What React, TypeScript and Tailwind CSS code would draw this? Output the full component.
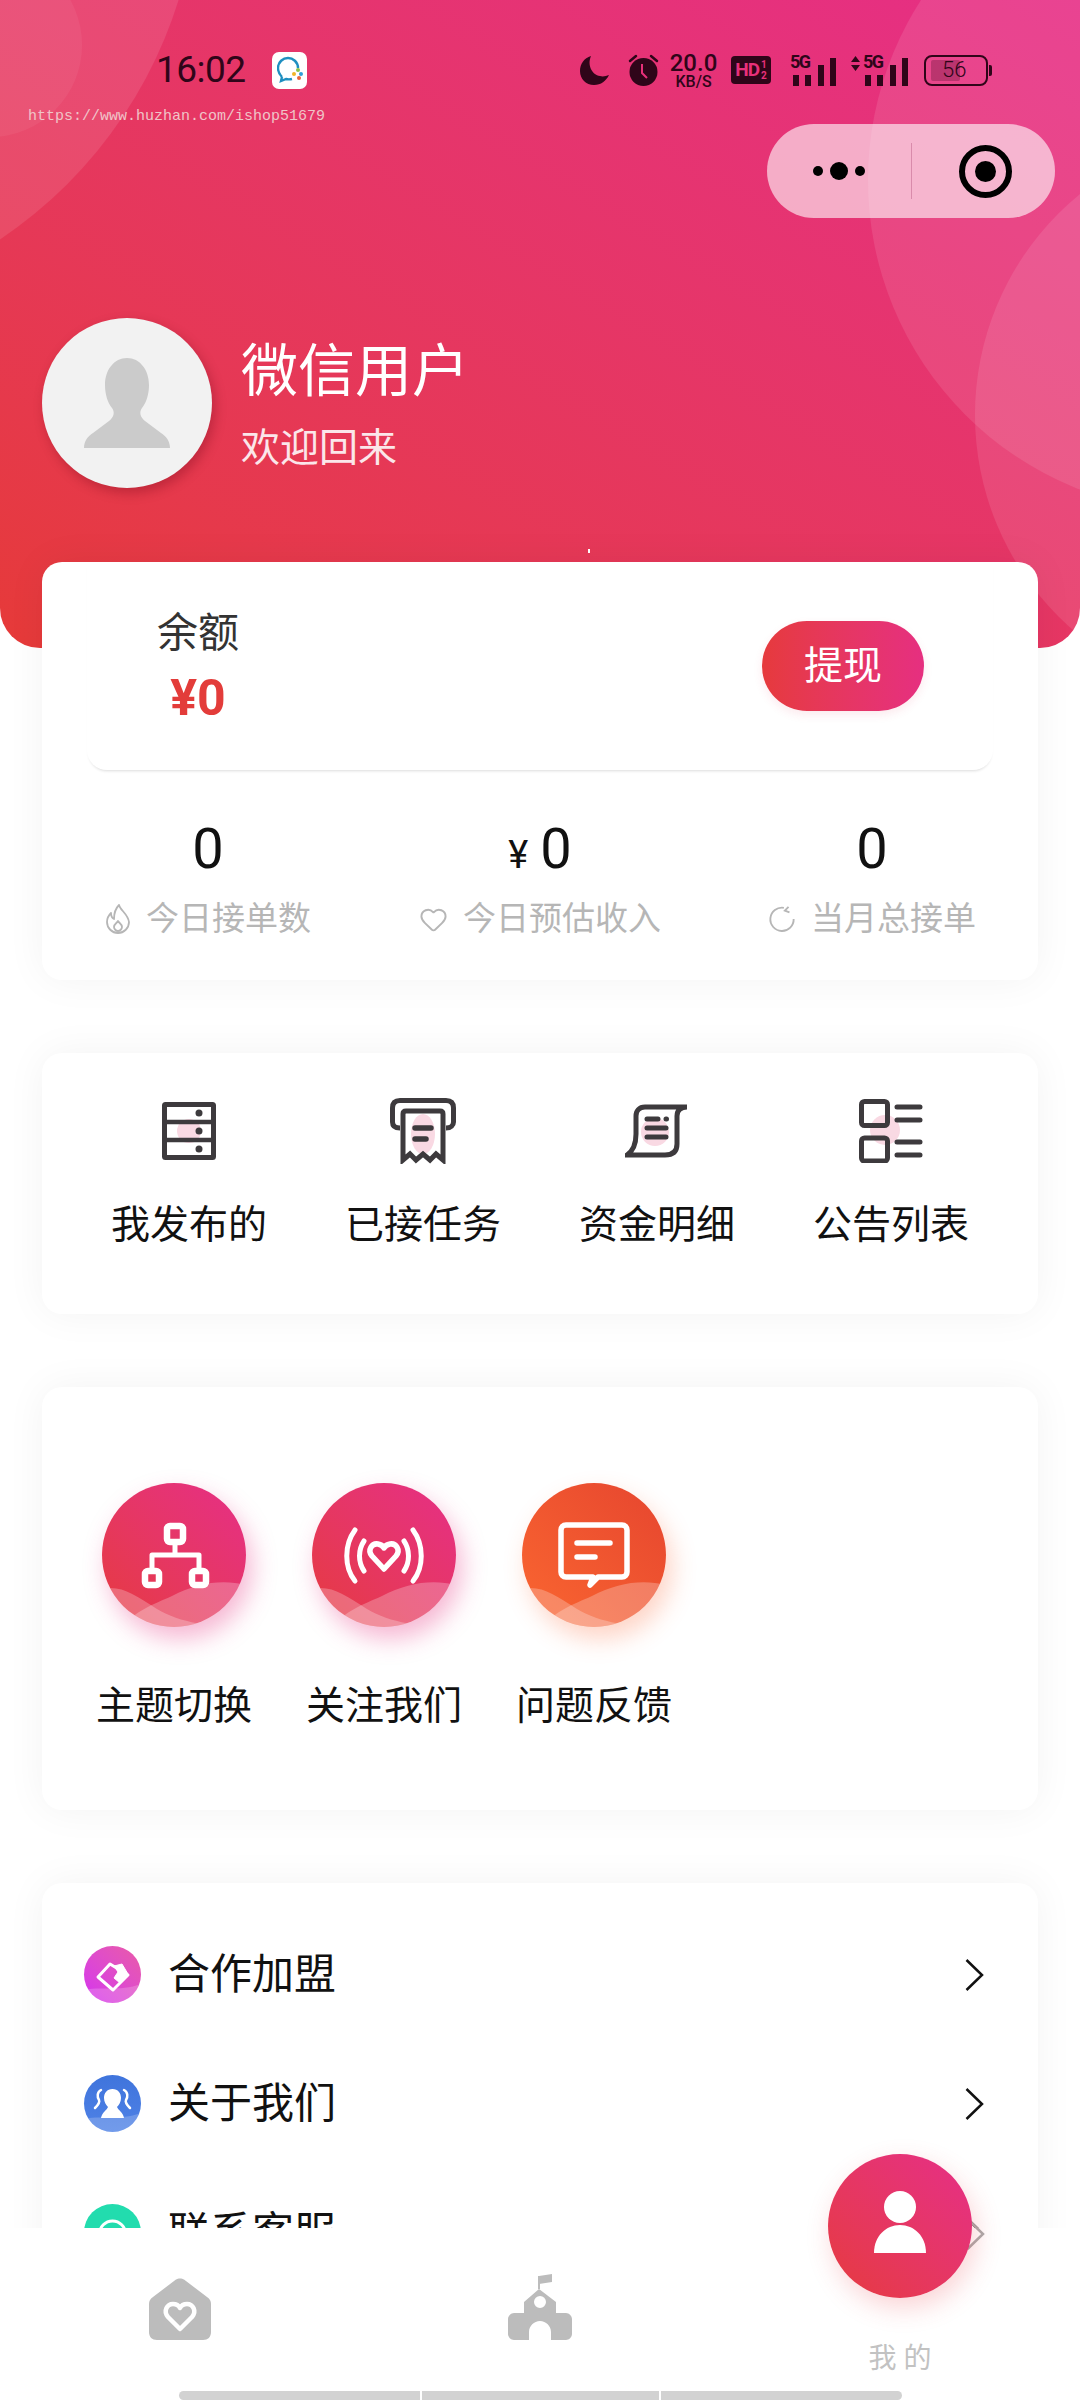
import React from 'react';
import { Heart } from 'lucide-react';

const INK = '#2f0519';

const Moon = () => (
    <svg width="29" height="29" viewBox="0 0 29 29"><path d="M11 0C4 2 0 8 0 15c0 8 6 14 14 14 7 0 12-4 15-10-3 1-6 2-9 1C12 19 7 9 11 0z" fill={INK} /></svg>
);

const Alarm = () => (
    <svg width="31" height="32" viewBox="0 0 31 32">
        <circle cx="15.5" cy="18" r="14" fill={INK} />
        <path d="M2 7 8 2M29 7l-6-5" stroke={INK} strokeWidth="2.5" strokeLinecap="round" />
        <path d="M14 10v9l5 5" stroke="#e8307a" strokeWidth="2" fill="none" />
    </svg>
);

const Signal = ({ arrows }: { arrows?: boolean }) => (
    <div className={arrows ? 'relative w-[58px] h-[31px]' : 'relative w-[46px] h-[31px]'}>
        {arrows && (
            <svg className="absolute left-0 top-[1px]" width="11" height="15" viewBox="0 0 11 15">
                <path d="M5.5 0 10 6H1zM5.5 15 1 9h9z" fill={INK} />
            </svg>
        )}
        <span className={arrows ? 'absolute left-[13px] top-[-1px] text-[18px] leading-[16px] font-bold tracking-[-1.5px]' : 'absolute left-0 top-[-1px] text-[18px] leading-[16px] font-bold tracking-[-1.5px]'} style={{ color: INK }}>5G</span>
        <svg className="absolute right-0 bottom-0" width="43" height="28" viewBox="0 0 43 28">
            <rect x="0" y="17" width="6" height="11" fill={INK} />
            <rect x="12" y="17" width="6" height="11" fill={INK} />
            <rect x="25" y="7" width="6" height="21" fill={INK} />
            <rect x="37" y="0" width="6" height="28" fill={INK} />
        </svg>
    </div>
);

const StatusBar = () => (
    <div className="flex items-center h-[40px] mt-[50px] pl-[156px] pr-[88px] text-[#2f0519]">
        <span className="text-[37px] leading-[40px] w-[92px] tracking-[-0.5px]">16:02</span>
        <div className="ml-[24px] w-[35px] h-[37px] bg-white rounded-[7px] flex items-center justify-center">
            <svg width="26" height="28" viewBox="0 0 26 28">
                <path d="M5 21C2 18 1 15 1 12 1 6 6 2 11 2s10 4 10 10" stroke="#1f8fc0" strokeWidth="2.4" fill="none" />
                <path d="M5 21l-1 4 5-2c2 .5 4 .5 6 0" stroke="#1f8fc0" strokeWidth="2.4" fill="none" />
                <circle cx="21" cy="14" r="2" fill="#8ac24a" />
                <circle cx="17" cy="18" r="2" fill="#f0b429" />
                <circle cx="22" cy="22" r="2" fill="#e8643a" />
                <circle cx="24" cy="18" r="2" fill="#2f9fd8" />
            </svg>
        </div>
        <div className="ml-auto flex items-center">
            <Moon />
            <div className="ml-[19px]"><Alarm /></div>
            <div className="ml-[10px] w-[49px] flex flex-col items-center">
                <span className="text-[24px] leading-[22px] font-medium">20.0</span>
                <span className="text-[16px] leading-[15px] font-medium">KB/S</span>
            </div>
            <div className="ml-[13px] w-[40px] h-[28px] bg-[#2f0519] rounded-[4px] flex items-center justify-center text-[#e8307a] font-bold">
                <span className="text-[19px] leading-[28px] tracking-[-1px]">HD</span>
                <span className="flex flex-col text-[10px] leading-[11px] ml-[2px]"><span>1</span><span>2</span></span>
            </div>
            <div className="ml-[19px]"><Signal /></div>
            <div className="ml-[14px]"><Signal arrows /></div>
            <div className="ml-[16px] flex items-center">
                <div className="relative w-[64px] h-[31px] border-[2.5px] border-[#2f0519] rounded-[8px] flex items-center">
                    <div className="absolute left-[5px] top-[3px] bottom-[3px] w-[29px] bg-[#2f0519]/25 rounded-[2px]" />
                    <span className="relative ml-[16px] text-[22px] leading-[26px] font-light">56</span>
                </div>
                <div className="w-[3px] h-[11px] ml-[1px] bg-[#2f0519] rounded-r-[2px]" />
            </div>
        </div>
    </div>
);

const Capsule = () => (
    <div className="ml-auto mr-[25px] mt-[34px] w-[288px] h-[94px] rounded-full bg-white/60 flex items-center">
        <div className="w-[144px] flex items-center justify-center gap-[7px]">
            <span className="w-[10px] h-[10px] rounded-full bg-black" />
            <span className="w-[18px] h-[18px] rounded-full bg-black" />
            <span className="w-[10px] h-[10px] rounded-full bg-black" />
        </div>
        <div className="w-[1px] h-[56px] bg-[#d98bab]" />
        <div className="flex-1 flex items-center justify-center pl-[4px]">
            <div className="w-[53px] h-[53px] rounded-full border-[6px] border-black flex items-center justify-center">
                <span className="w-[21px] h-[21px] rounded-full bg-black" />
            </div>
        </div>
    </div>
);

const Header = () => (
    <div className="relative h-[648px] rounded-b-[40px] overflow-hidden bg-linear-to-tr from-[#e63a38] to-[#e62e86]">
        {/* background blobs */}
        <div className="absolute left-[-701px] top-[-584px] w-[900px] h-[900px] rounded-full bg-white/10" />
        <div className="absolute left-[-102px] top-[-47px] w-[184px] h-[184px] rounded-full bg-white/5" />
        <div className="absolute left-[868px] top-[-152px] w-[664px] h-[664px] rounded-full bg-white/10" />
        <div className="absolute left-[975px] top-[130px] w-[570px] h-[570px] rounded-full bg-white/10" />
        <span className="absolute left-[28px] top-[108px] text-[15px] leading-[18px] text-[#f0c4c8] font-['Liberation_Mono',monospace]">https://www.huzhan.com/ishop51679</span>
        <span className="absolute left-[588px] top-[549px] w-[2px] h-[4px] bg-white" />
        <div className="relative flex flex-col">
            <StatusBar />
            <Capsule />
            <div className="flex items-center ml-[42px] mt-[100px] gap-[29px]">
                <div className="w-[170px] h-[170px] rounded-full bg-[#f2f2f2] shadow-[3px_5px_12px_rgba(100,0,20,0.3)] flex items-center justify-center">
                    <svg width="88" height="90" viewBox="0 0 88 90">
                        <path d="M44 0c13 0 22 12 22 27 0 10-3 18-7 23-3 4-2 9 3 13l16 12c5 3 9 8 9 15H1c0-7 4-12 9-15l16-12c5-4 6-9 3-13-4-5-7-13-7-23C22 12 31 0 44 0z" fill="#cbcbcb" />
                    </svg>
                </div>
                <div className="flex flex-col text-white mt-[5px]">
                    <span className="text-[57px] leading-[66px]">微信用户</span>
                    <span className="text-[39px] leading-[48px] mt-[19px] text-[#fbe6ea]">欢迎回来</span>
                </div>
            </div>
        </div>
    </div>
);

const stats = [
    {
        label: '今日接单数',
        value: '0',
        icon: (
            <svg width="26" height="30" viewBox="0 0 26 30" fill="none" stroke="currentColor" strokeWidth="1.8" strokeLinejoin="round">
                <path d="M14 1c1 5 9 9 10 17 0 6-5 11-11 11S2 24 2 18c0-4 2-7 4-9 0 3 1 5 3 6 0-5 1-10 5-14z" />
                <path d="M13 17c1 2 4 3 4 6 0 2-2 4-4 4s-4-2-4-4c0-3 3-4 4-6z" />
            </svg>
        ),
    },
    { label: '今日预估收入', value: '0', yen: true, icon: <Heart size={29} strokeWidth={1.6} /> },
    {
        label: '当月总接单',
        value: '0',
        icon: (
            <svg width="28" height="28" viewBox="0 0 30 30" fill="none" stroke="currentColor" strokeWidth="2">
                <path d="M17 3A12.5 12.5 0 1 0 27.5 15" />
                <path d="M22 2l-4 4 5 2" />
            </svg>
        ),
    },
];

const BalanceCard = () => (
    <div className="h-[418px] bg-white rounded-[20px] shadow-[0_0_40px_rgba(0,0,0,0.05)]">
        <div className="mx-[45px] h-[208px] rounded-b-[20px] shadow-[0_3px_3px_-2px_rgba(0,0,0,0.14)] flex items-center justify-between pl-[70px] pr-[69px]">
            <div className="flex flex-col items-center w-[82px] mt-[2px]">
                <span className="text-[41px] leading-[48px] text-[#333]">余额</span>
                <span className="text-[50px] leading-[56px] mt-[13px] font-bold text-[#e33c3a]">¥0</span>
            </div>
            <div className="w-[162px] h-[90px] rounded-full bg-linear-to-r from-[#e63a3c] to-[#e62f80] shadow-[0_4px_10px_rgba(230,50,90,0.1)] text-white text-[39px] flex items-center justify-center">提现</div>
        </div>
        <div className="grid grid-cols-3 mt-[49px]">
            {stats.map((s) => (
                <div key={s.label} className="flex flex-col items-center">
                    <div className="flex items-baseline h-[60px] text-[#111]">
                        {s.yen && <span className="text-[38px] leading-[60px] mr-[12px]">¥</span>}
                        <span className="text-[56px] leading-[60px]">{s.value}</span>
                    </div>
                    <div className="flex items-center gap-[15px] mt-[17px] text-[#b6b6b6]">
                        {s.icon}
                        <span className="text-[33px] leading-[46px]">{s.label}</span>
                    </div>
                </div>
            ))}
        </div>
    </div>
);

const DARK = '#3d3a3d';
const PINK = '#f9d9e3';

const tools = [
    {
        label: '我发布的',
        icon: (
            <svg width="54" height="58" viewBox="0 0 54 58" fill="none" stroke={DARK}>
                <circle cx="27" cy="29" r="12" fill={PINK} stroke="none" />
                <rect x="2.5" y="2.5" width="49" height="53" rx="1" strokeWidth="5" />
                <path d="M3 20h48M3 38h48" strokeWidth="4.5" />
                <circle cx="37" cy="11" r="3.5" fill={DARK} stroke="none" />
                <circle cx="37" cy="29" r="3.5" fill={DARK} stroke="none" />
                <circle cx="37" cy="47" r="3.5" fill={DARK} stroke="none" />
            </svg>
        ),
    },
    {
        label: '已接任务',
        icon: (
            <svg width="66" height="66" viewBox="0 0 66 66" fill="none" stroke={DARK} strokeWidth="5">
                <ellipse cx="33" cy="36" rx="12" ry="20" fill={PINK} stroke="none" />
                <path d="M10 30C4 30 2.5 27 2.5 24V10C2.5 5 5 2.5 10 2.5H56C61 2.5 63.5 5 63.5 10V24C63.5 27 61 30 56 30" />
                <path d="M13 62V16C13 14 14 13 16 13H50C52 13 53 14 53 16V62L46 56 40 62 33 56 26 62 20 56 13 62Z" />
                <path d="M25 30H41M25 41H36" strokeWidth="5.5" strokeLinecap="round" />
            </svg>
        ),
    },
    {
        label: '资金明细',
        icon: (
            <svg width="64" height="54" viewBox="0 0 64 54" fill="none" stroke={DARK} strokeWidth="5" strokeLinecap="round">
                <circle cx="30" cy="28" r="14" fill={PINK} stroke="none" />
                <path d="M62 3H20C14 3 11 7 11 12V30C11 41 8 47 2 51H40C48 51 52 47 52 40V12C52 7 55 3 62 3Z" />
                <path d="M22 15H33M41 15H41.5M22 24H41M22 33H41" />
            </svg>
        ),
    },
    {
        label: '公告列表',
        icon: (
            <svg width="64" height="64" viewBox="0 0 64 64" fill="none" stroke={DARK} strokeWidth="5" strokeLinecap="round">
                <circle cx="26" cy="31" r="15" fill={PINK} stroke="none" />
                <rect x="2.5" y="2.5" width="26" height="24" rx="3" />
                <rect x="2.5" y="39" width="26" height="23" rx="3" />
                <path d="M38 8H61M38 21H61M38 43H61M38 56H61" />
            </svg>
        ),
    },
];

const ToolsCard = () => (
    <div className="h-[261px] bg-white rounded-[20px] shadow-[0_0_40px_rgba(0,0,0,0.05)] grid grid-cols-4 px-[30px] pt-[45px]">
        {tools.map((t) => (
            <div key={t.label} className="flex flex-col items-center">
                <div className="h-[66px] flex items-center justify-center">{t.icon}</div>
                <span className="mt-[36px] text-[39px] leading-[50px] text-[#111]">{t.label}</span>
            </div>
        ))}
    </div>
);

const Waves = () => (
    <svg className="absolute inset-0" width="144" height="144" viewBox="0 0 144 144">
        <path d="M0 106C20 102 32 112 55 126 78 140 110 144 144 144H0Z" fill="#fff" fillOpacity="0.25" />
        <path d="M22 144C32 128 50 122 70 113 95 100 120 96 144 102V144Z" fill="#fff" fillOpacity="0.25" />
    </svg>
);

const shortcuts = [
    {
        label: '主题切换',
        circle: 'relative w-[144px] h-[144px] rounded-full overflow-hidden bg-linear-to-tr from-[#e63a3c] to-[#e62e86]',
        glow: 'rounded-full shadow-[6px_12px_24px_rgba(230,50,130,0.35)]',
        icon: (
            <svg className="absolute inset-0" width="144" height="144" viewBox="0 0 144 144" fill="none" stroke="#fff" strokeWidth="5" strokeLinejoin="round">
                <rect x="65" y="43" width="16" height="16" rx="3" strokeWidth="6.5" />
                <path d="M73 60V72M50 86V72H97V86" />
                <rect x="43" y="88" width="14" height="14" rx="3" strokeWidth="6.5" />
                <rect x="90" y="88" width="14" height="14" rx="3" strokeWidth="6.5" />
            </svg>
        ),
    },
    {
        label: '关注我们',
        circle: 'relative w-[144px] h-[144px] rounded-full overflow-hidden bg-linear-to-tr from-[#e63a3c] to-[#e62e86]',
        glow: 'rounded-full shadow-[6px_12px_24px_rgba(230,50,130,0.35)]',
        icon: (
            <svg className="absolute inset-0" width="144" height="144" viewBox="0 0 144 144" fill="none" stroke="#fff" strokeWidth="5" strokeLinecap="round">
                <path d="M72 86 60 73C55 67 60 60 66 61 69 61.5 71 63 72 65 73 63 75 61.5 78 61 84 60 89 67 84 73Z" strokeWidth="5.5" strokeLinejoin="round" />
                <path d="M52 58C46 67 46 79 52 88M92 58C98 67 98 79 92 88" />
                <path d="M43 47C32 62 32 84 43 98M101 47C112 62 112 84 101 98" />
            </svg>
        ),
    },
    {
        label: '问题反馈',
        circle: 'relative w-[144px] h-[144px] rounded-full overflow-hidden bg-linear-to-tr from-[#fa6630] to-[#e6452f]',
        glow: 'rounded-full shadow-[6px_12px_24px_rgba(250,100,50,0.28)]',
        icon: (
            <svg className="absolute inset-0" width="144" height="144" viewBox="0 0 144 144" fill="none" stroke="#fff" strokeWidth="5.5" strokeLinecap="round" strokeLinejoin="round">
                <path d="M44 42H100C103 42 105 44 105 47V89C105 92 103 94 100 94H76L68 102 71 94H44C41 94 39 92 39 89V47C39 44 41 42 44 42Z" />
                <path d="M55 60H88M55 74H73" />
            </svg>
        ),
    },
];

const ShortcutCard = () => (
    <div className="h-[423px] bg-white rounded-[20px] shadow-[0_0_40px_rgba(0,0,0,0.05)] flex pl-[27px] pt-[96px]">
        {shortcuts.map((s) => (
            <div key={s.label} className="w-[210px] flex flex-col items-center">
                <div className={s.glow}>
                    <div className={s.circle}>
                        <Waves />
                        {s.icon}
                    </div>
                </div>
                <span className="mt-[54px] text-[39px] leading-[50px] text-[#111]">{s.label}</span>
            </div>
        ))}
    </div>
);

const MiniWave = () => (
    <svg className="absolute inset-0" width="57" height="57" viewBox="0 0 57 57">
        <path d="M0 44C15 40 35 46 57 38V57H0Z" fill="#fff" fillOpacity="0.2" />
    </svg>
);

const menu = [
    {
        label: '合作加盟',
        circle: 'relative w-[57px] h-[57px] rounded-full overflow-hidden bg-linear-to-bl from-[#ea5aa6] to-[#d52ff0]',
        icon: (
            <svg className="absolute inset-0" width="57" height="57" viewBox="0 0 57 57" fill="none" stroke="#fff" strokeWidth="3" strokeLinejoin="round">
                <path d="M14 31 26 18 44 29 29 44Z" />
                <path d="M30 20 38 18 44 28 36 37 30 32 34 26Z" fill="#fff" strokeWidth="1" />
            </svg>
        ),
    },
    {
        label: '关于我们',
        circle: 'relative w-[57px] h-[57px] rounded-full overflow-hidden bg-linear-to-b from-[#3f74dc] to-[#4f82e6]',
        icon: (
            <svg className="absolute inset-0" width="57" height="57" viewBox="0 0 57 57" fill="none">
                <path d="M28.5 14C23 14 20 18 20 23 20 27 22 30 24 32 23 35 18 37 17 43H40C39 37 34 35 33 32 35 30 37 27 37 23 37 18 34 14 28.5 14Z" fill="#fff" />
                <path d="M17 15C13 17 13 22 15 25 16 27 14 30 11 33M40 15C44 17 44 22 42 25 41 27 43 30 46 33" stroke="#fff" strokeWidth="2.5" strokeLinecap="round" />
            </svg>
        ),
    },
    {
        label: '联系客服',
        circle: 'relative w-[57px] h-[57px] rounded-full overflow-hidden bg-[#22dcae]',
        icon: (
            <svg className="absolute inset-0" width="57" height="57" viewBox="0 0 57 57" fill="none">
                <circle cx="28.5" cy="30" r="13" stroke="#fff" strokeWidth="3" />
            </svg>
        ),
    },
];

const Chevron = ({ color }: { color: string }) => (
    <svg width="19" height="32" viewBox="0 0 19 32" fill="none" stroke={color} strokeWidth="2.5"><path d="M1.5 1 17 16 1.5 31" /></svg>
);

const MenuCard = () => (
    <div className="bg-white rounded-[20px] shadow-[0_0_40px_rgba(0,0,0,0.05)] pt-[27px] pb-[20px]">
        {menu.map((m) => (
            <div key={m.label} className="h-[129px] flex items-center pl-[42px] pr-[54px]">
                <div className={m.circle}>
                    <MiniWave />
                    {m.icon}
                </div>
                <span className="ml-[27px] text-[42px] leading-[50px] text-[#111]">{m.label}</span>
                <div className="ml-auto"><Chevron color="#111" /></div>
            </div>
        ))}
    </div>
);

const TabBar = () => (
    <div className="absolute left-0 right-0 bottom-0 h-[172px] bg-white grid grid-cols-3">
        <div className="flex justify-center pt-[50px]">
            <svg width="62" height="62" viewBox="0 0 62 62">
                <path d="M27 1.5C29 0 33 0 35 1.5L58 19C61 21 62 23 62 26V54C62 59 59 62 54 62H8C3 62 0 59 0 54V26C0 23 1 21 4 19Z" fill="#bcbcbc" />
                <path d="M31 51 19 39C14 33 18 26 24 26 27 26 30 28 31 30 32 28 35 26 38 26 44 26 48 33 43 39Z" fill="none" stroke="#fff" strokeWidth="4.5" strokeLinejoin="round" />
            </svg>
        </div>
        <div className="flex justify-center pt-[46px]">
            <svg width="64" height="66" viewBox="0 0 64 66">
                <path d="M31 2V15" stroke="#bcbcbc" strokeWidth="2" />
                <path d="M31 2 44 0V8L31 10Z" fill="#bcbcbc" />
                <path fillRule="evenodd" d="M31 15 48 28V39H58C61 39 64 42 64 45V60C64 63 61 66 58 66H43V58C43 52 38 47 32 47 26 47 21 52 21 58V66H6C3 66 0 63 0 60V45C0 42 3 39 6 39H16V28ZM32 22A6 6 0 1 0 32 34 6 6 0 1 0 32 22Z" fill="#bcbcbc" />
            </svg>
        </div>
        <div className="relative flex justify-center pt-[115px]">
            <div className="absolute left-[246px] top-[-10px]"><Chevron color="#ababab" /></div>
            <div className="absolute left-[108px] top-[-74px] w-[144px] h-[144px] rounded-full bg-linear-to-tr from-[#e63a3c] to-[#e62e86] shadow-[4px_10px_26px_rgba(230,60,70,0.22)] flex items-center justify-center">
                <svg width="52" height="63" viewBox="0 0 52 63" className="mb-[8px]">
                    <circle cx="26" cy="16" r="16" fill="#fff" />
                    <path d="M0 62C0 45 12 34 26 34S52 45 52 62Z" fill="#fff" />
                </svg>
            </div>
            <span className="text-[28px] leading-[32px] text-[#c2c2c2]">我 的</span>
        </div>
        <div className="absolute left-0 right-0 bottom-0 flex justify-center gap-[2px]">
            <div className="w-[241px] h-[9px] bg-[#d2d2d2] rounded-l-full" />
            <div className="w-[237px] h-[9px] bg-[#d2d2d2]" />
            <div className="w-[241px] h-[9px] bg-[#d2d2d2] rounded-r-full" />
        </div>
    </div>
);

const App = () => {
    return (
        <div className="relative w-[1080px] h-[2400px] overflow-hidden bg-white font-['Roboto','Noto_Sans_CJK_SC',sans-serif]">
            <Header />
            <div className="relative flex flex-col gap-[73px] mx-[42px] mt-[-86px]">
                <BalanceCard />
                <ToolsCard />
                <ShortcutCard />
                <MenuCard />
            </div>
            <TabBar />
        </div>
    );
};

export default App;
